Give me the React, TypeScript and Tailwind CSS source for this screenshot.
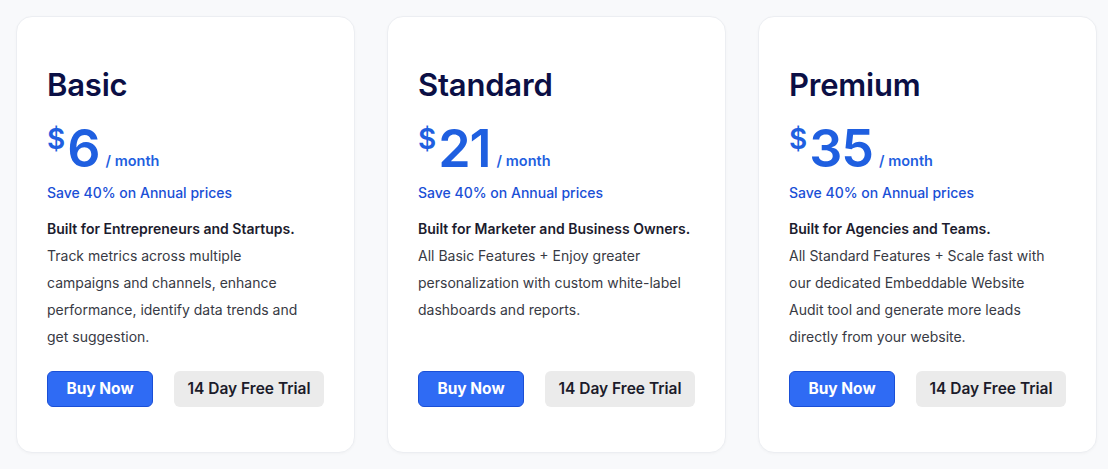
import React from "react";

const plans = [
  {
    name: "Basic",
    price: "6",
    lead: "Built for Entrepreneurs and Startups.",
    body: [
      "Track metrics across multiple",
      "campaigns and channels, enhance",
      "performance, identify data trends and",
      "get suggestion.",
    ],
  },
  {
    name: "Standard",
    price: "21",
    lead: "Built for Marketer and Business Owners.",
    body: [
      "All Basic Features + Enjoy greater",
      "personalization with custom white-label",
      "dashboards and reports.",
    ],
  },
  {
    name: "Premium",
    price: "35",
    lead: "Built for Agencies and Teams.",
    body: [
      "All Standard Features + Scale fast with",
      "our dedicated Embeddable Website",
      "Audit tool and generate more leads",
      "directly from your website.",
    ],
  },
];

export default function App() {
  return (
    <div
      className="w-[1108px] h-[469px] bg-[#f8f9fb] flex gap-[32px] pl-[16px] pt-[16px]"
      style={{ fontFamily: "Inter, 'Noto Sans', sans-serif" }}
    >
      {plans.map((p) => (
        <div
          key={p.name}
          className="w-[339px] h-[437px] bg-white rounded-[16px] border border-[#eceef2] shadow-[0_1px_3px_rgba(0,0,0,0.03)] pl-[30px] pr-[20px] pt-[50px] flex flex-col"
        >
          <h2 className="text-[31px] leading-[36px] font-semibold text-[#0b0f45] tracking-[-0.2px]">
            {p.name}
          </h2>
          <div className="flex items-start mt-[23px] text-[#1f5fe0] h-[48px]">
            <span className="text-[28px] leading-[28px] font-semibold mt-[-1px]">$</span>
            <span className="text-[52px] leading-[46px] font-semibold ml-[2px] tracking-[-1px]">
              {p.price}
            </span>
            <span className="text-[14.5px] font-semibold ml-[6px] mt-[25px] leading-[20px]">
              / month
            </span>
          </div>
          <p className="text-[14px] leading-[20px] font-medium text-[#1a4fd6] mt-[9px]">
            Save 40% on Annual prices
          </p>
          <p className="text-[14px] leading-[20px] font-semibold text-[#1c1c2e] mt-[16px]">
            {p.lead}
          </p>
          <p className="text-[14px] leading-[27px] text-[#383a44] mt-[3px] whitespace-nowrap">
            {p.body.map((line, i) => (
              <React.Fragment key={i}>
                {line}
                {i < p.body.length - 1 && <br />}
              </React.Fragment>
            ))}
          </p>
          <div className="flex gap-[21px] mt-auto mb-[45px]">
            <button className="w-[106px] h-[36px] rounded-[6px] bg-[#2f6bf4] border border-[#1a4fd6] text-white text-[15.5px] font-bold">
              Buy Now
            </button>
            <button className="w-[150px] h-[36px] rounded-[6px] bg-[#ebebeb] text-[#1b1b2a] text-[15.5px] font-semibold">
              14 Day Free Trial
            </button>
          </div>
        </div>
      ))}
    </div>
  );
}
